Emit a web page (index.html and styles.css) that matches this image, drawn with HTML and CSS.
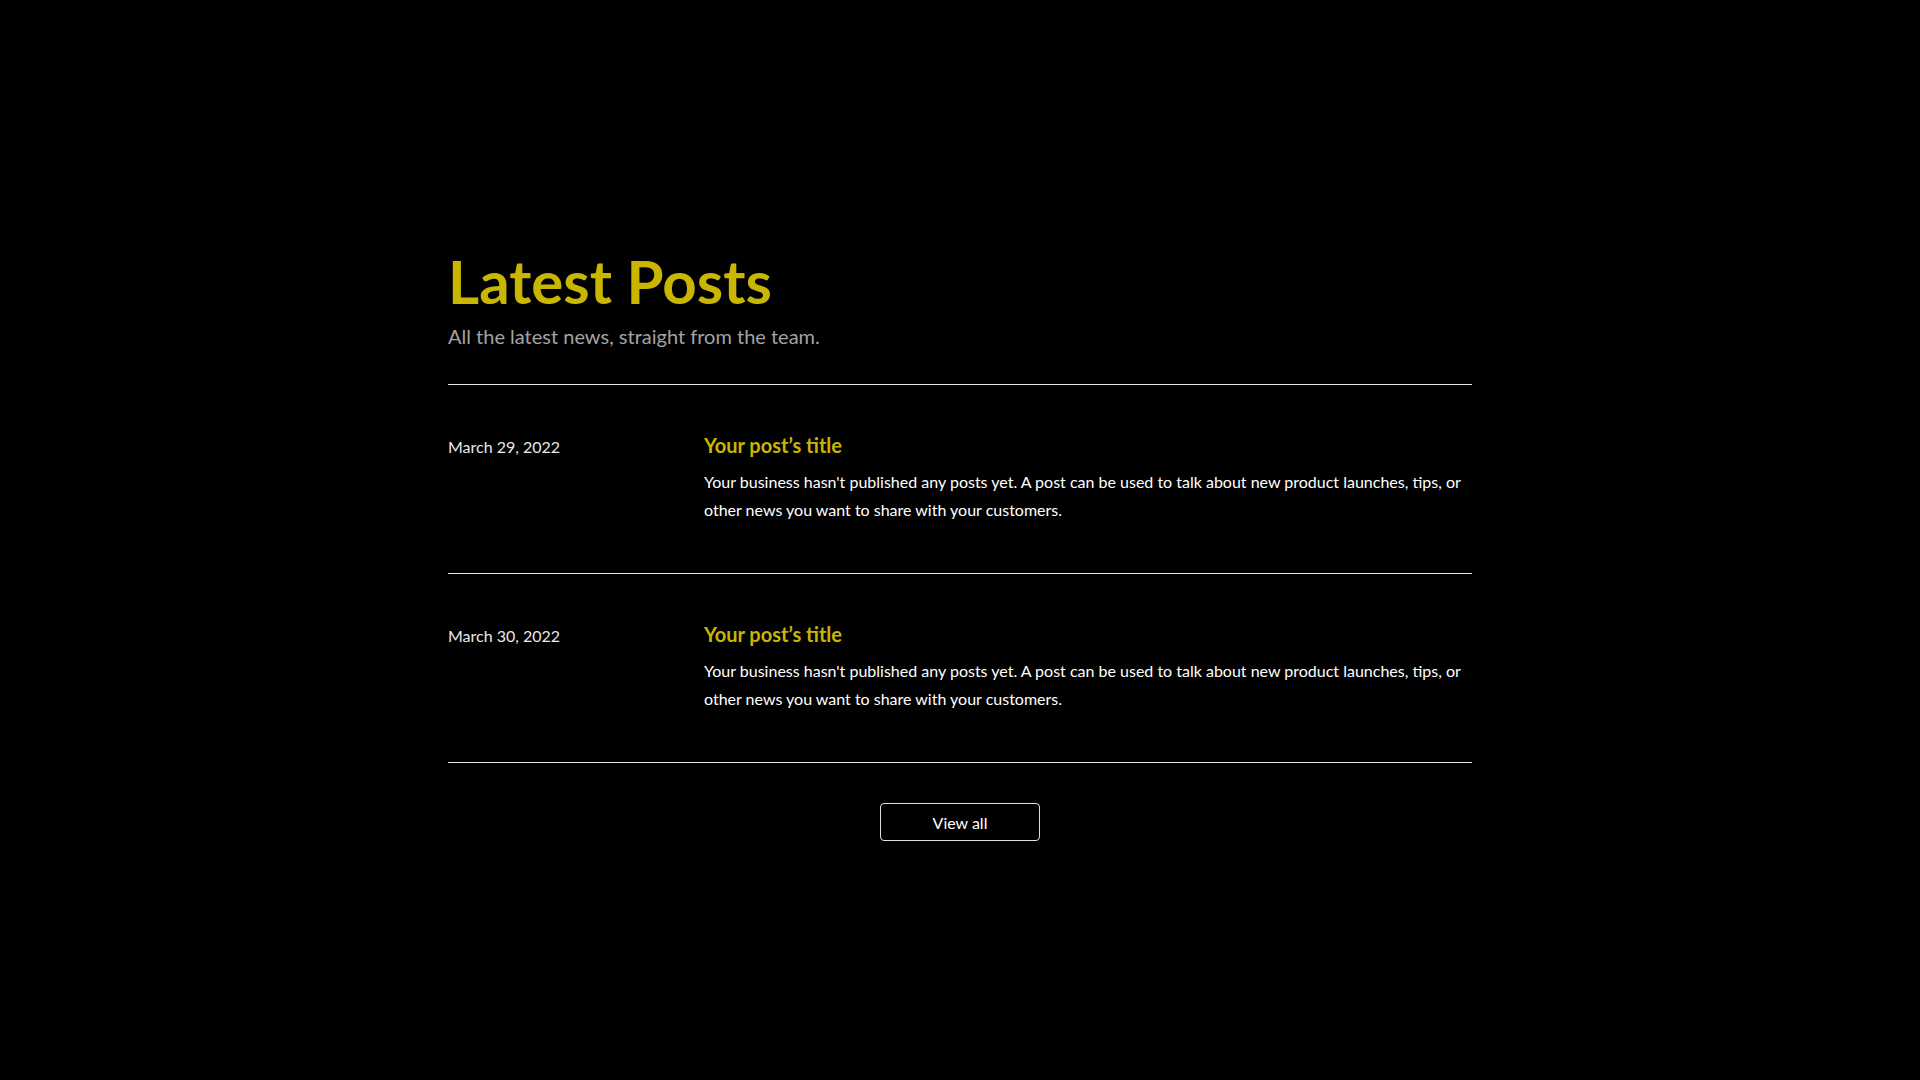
FILE: index.html
```html
<!DOCTYPE html>
<html lang="en">
<head>
<meta charset="utf-8">
<title>Latest Posts</title>
<link rel="stylesheet" href="styles.css">
</head>
<body>
<main class="page">
  <section class="posts">
    <header class="posts-header">
      <h1 class="posts-title">Latest Posts</h1>
      <p class="posts-subtitle">All the latest news, straight from the team.</p>
    </header>
    <ul class="post-list">
      <li class="post">
        <div class="post-date">March 29, 2022</div>
        <div class="post-body">
          <h2 class="post-title">Your post’s title</h2>
          <p class="post-text">Your business hasn't published any posts yet. A post can be used to talk about new product launches, tips, or other news you want to share with your customers.</p>
        </div>
      </li>
      <li class="post">
        <div class="post-date">March 30, 2022</div>
        <div class="post-body">
          <h2 class="post-title">Your post’s title</h2>
          <p class="post-text">Your business hasn't published any posts yet. A post can be used to talk about new product launches, tips, or other news you want to share with your customers.</p>
        </div>
      </li>
    </ul>
    <div class="actions">
      <a class="view-all" href="#">View all</a>
    </div>
  </section>
</main>
</body>
</html>
```

FILE: styles.css
```css
* { box-sizing: border-box; }
html, body {
  margin: 0;
  padding: 0;
  background: #000;
}
body {
  font-family: Lato, "Open Sans", sans-serif;
  color: #fff;
  min-height: 1080px;
}
.page {
  display: flex;
  justify-content: center;
  padding-top: 245px;
}
.posts {
  width: 1024px;
}
.posts-header {
  padding-bottom: 36px;
  border-bottom: 1px solid #e6e6e6;
}
.posts-title {
  margin: 0;
  font-size: 60px;
  line-height: 72px;
  font-weight: 700;
  color: #c8b600;
}
.posts-subtitle {
  margin: 7px 0 0;
  font-size: 20px;
  line-height: 24px;
  color: #a3a3a3;
}
.post-list {
  list-style: none;
  margin: 0;
  padding: 0;
}
.post {
  display: grid;
  grid-template-columns: 256px 1fr;
  padding: 48px 0 49px;
  border-bottom: 1px solid #e6e6e6;
}
.post-date {
  padding-top: 4px;
  font-size: 16px;
  line-height: 19px;
  color: #e8e8e8;
}
.post-title {
  margin: 0;
  font-size: 20px;
  line-height: 24px;
  font-weight: 700;
  color: #c8b600;
}
.post-text {
  margin: 11px 0 0;
  font-size: 16px;
  line-height: 28px;
  color: #fff;
}
.actions {
  display: flex;
  justify-content: center;
  padding-top: 40px;
}
.view-all {
  display: flex;
  align-items: center;
  justify-content: center;
  width: 160px;
  height: 38px;
  border: 1px solid #e0e0e0;
  border-radius: 4px;
  color: #fff;
  text-decoration: none;
  font-size: 16px;
}
```
